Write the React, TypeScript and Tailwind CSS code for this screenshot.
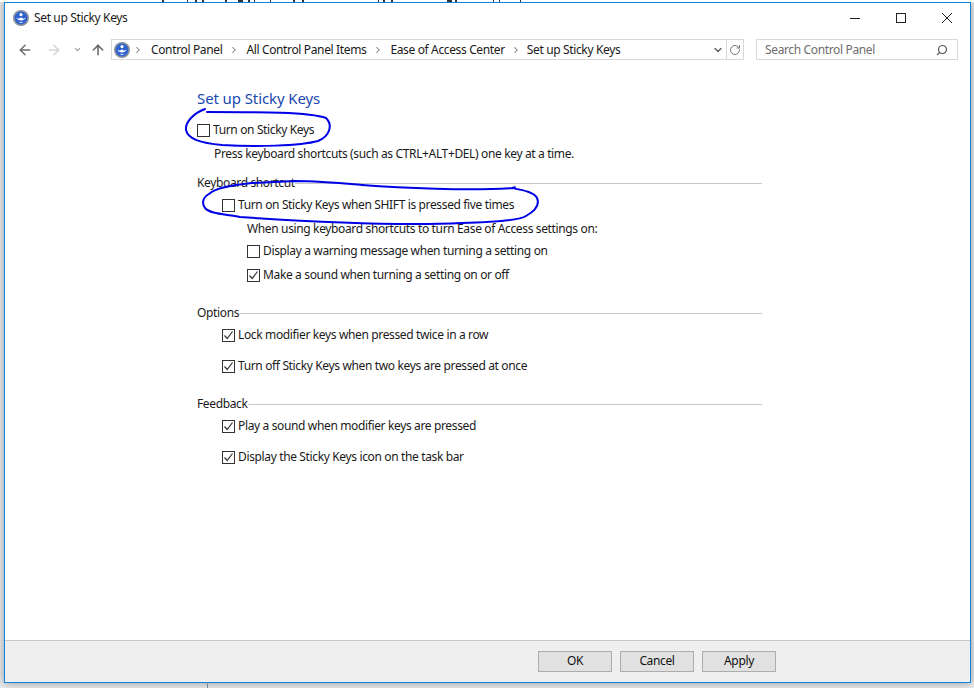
import { ArrowLeft, ArrowRight, ArrowUp, ChevronDown, ChevronRight, RotateCw, Search } from 'lucide-react';

const font = "[font-family:'Noto_Sans',sans-serif]";

// bottoms of the letters of the page behind the window, too cut off to read
const scraps = [[162, 2], [187, 1], [195, 2], [202, 2], [225, 2], [238, 5], [248, 2], [254, 1], [270, 1], [293, 2], [302, 2], [378, 1], [383, 2], [391, 2], [447, 5], [455, 2], [493, 1], [499, 1], [520, 1]];

const CpIcon = () => (
  <svg width="16" height="16" viewBox="0 0 16 16" className="shrink-0">
    <circle cx="8" cy="8" r="8" fill="#8a909c" />
    <circle cx="8" cy="8" r="6.4" fill="#2f62cf" />
    <circle cx="8" cy="4.6" r="1.6" fill="#fff" />
    <path d="M3.4 7.6 C4.6 11.6 11.4 11.6 12.6 7.6 L10.6 8.8 L8 7.4 L5.4 8.8 Z" fill="#fff" />
    <path d="M6.4 12.4 H9.6" stroke="#cfe0ff" strokeWidth="1" />
  </svg>
);

const Check = ({ checked = false }: { checked?: boolean }) => (
  <span className="flex h-[13px] w-[13px] shrink-0 items-center justify-center border border-[#333] bg-white">
    {checked && (
      <svg width="11" height="11" viewBox="0 0 11 11">
        <path d="M1.5 5.5 L4.2 8.5 L9.5 1.5" stroke="#333" strokeWidth="1.2" fill="none" />
      </svg>
    )}
  </span>
);

const CheckRow = ({ label, checked, className }: { label: string; checked?: boolean; className: string }) => (
  <div className={`flex h-[16px] items-center gap-[3px] ${className}`}>
    <Check checked={checked} />
    <span className="whitespace-nowrap">{label}</span>
  </div>
);

const GroupTitle = ({ label, className }: { label: string; className: string }) => (
  <div className={`flex h-[16px] w-[565px] items-center ${className}`}>
    <span className="whitespace-nowrap">{label}</span>
    <span className="h-px flex-1 bg-[#c8c8c8]" />
  </div>
);

const Crumb = ({ label, gap }: { label: string; gap: string }) => (
  <>
    <ChevronRight size={10} strokeWidth={2.5} className={`shrink-0 text-[#777] ${gap}`} />
    <span className="whitespace-nowrap px-[2px]">{label}</span>
  </>
);

const Btn = ({ label }: { label: string }) => (
  <button className="h-[21px] w-[74px] border border-[#adadad] bg-[#e1e1e1] text-[12px] leading-none text-[#111]">{label}</button>
);

export default function App() {
  return (
    <div className={`relative h-[688px] w-[974px] overflow-hidden bg-[#e8e8e8] pl-[4px] pt-[2px] text-[12px] leading-[16px] tracking-[-0.36px] text-[#1a1a1a] ${font}`}>
      {/* window */}
      <div className="flex h-[681px] w-[967px] flex-col border border-[#0f83e0] bg-white shadow-[0_0_8px_rgba(0,0,0,0.35)]">
        {/* title bar */}
        <div className="flex h-[30px] shrink-0 items-center pl-[8px]">
          <CpIcon />
          <span className="ml-[5px]">Set up Sticky Keys</span>
          <div className="ml-auto flex items-center text-[#222]">
            <svg width="46" height="12" viewBox="0 0 46 12"><path d="M18 6.5 H28" stroke="#222" /></svg>
            <svg width="46" height="12" viewBox="0 0 46 12"><rect x="18.5" y="1.5" width="9" height="9" fill="none" stroke="#222" /></svg>
            <svg width="46" height="12" viewBox="0 0 46 12"><path d="M18 1 L28 11 M28 1 L18 11" stroke="#222" /></svg>
          </div>
        </div>

        {/* address bar */}
        <div className="mt-[6px] flex h-[21px] shrink-0 items-center pl-[12px]">
          <ArrowLeft size={16} strokeWidth={2.2} className="text-[#6b6b6b]" />
          <ArrowRight size={16} strokeWidth={2.2} className="ml-[13px] text-[#d4d4d4]" />
          <ChevronDown size={9} strokeWidth={3} className="ml-[11px] text-[#999]" />
          <ArrowUp size={16} strokeWidth={2.4} className="ml-[8px] text-[#6b6b6b]" />
          <div className="ml-[5px] flex h-[21px] w-[633px] items-center border border-[#d9d9d9] pl-[2px]">
            <CpIcon />
            <Crumb label="Control Panel" gap="ml-[3px] mr-[6px]" />
            <Crumb label="All Control Panel Items" gap="mx-[5px]" />
            <Crumb label="Ease of Access Center" gap="mx-[5px]" />
            <Crumb label="Set up Sticky Keys" gap="mx-[4px]" />
            <div className="ml-auto flex h-full items-center">
              <ChevronDown size={12} strokeWidth={2.4} className="mr-[2px] text-[#555]" />
              <div className="flex h-full w-[17px] items-center justify-center border-l border-[#d9d9d9]">
                <RotateCw size={12} strokeWidth={2} className="text-[#777]" />
              </div>
            </div>
          </div>
          <div className="ml-[12px] flex h-[21px] w-[202px] items-center justify-between border border-[#d9d9d9] pl-[8px] pr-[9px] text-[#6d6d6d]">
            <span>Search Control Panel</span>
            <Search size={12} strokeWidth={2.4} className="-scale-x-100 text-[#555]" />
          </div>
        </div>

        {/* content */}
        <div className="flex min-h-0 flex-1 flex-col pl-[192px]">
          <h1 className="mt-[28px] h-[20px] text-[15px] font-normal leading-[20px] tracking-[-0.1px] text-[#1a49ad]">Set up Sticky Keys</h1>
          <CheckRow label="Turn on Sticky Keys" className="mt-[14px]" />
          <p className="ml-[17px] mt-[8px] whitespace-nowrap">Press keyboard shortcuts (such as CTRL+ALT+DEL) one key at a time.</p>
          <GroupTitle label="Keyboard shortcut" className="mt-[13px]" />
          <CheckRow label="Turn on Sticky Keys when SHIFT is pressed five times" className="ml-[25px] mt-[6px]" />
          <p className="ml-[50px] mt-[8px] whitespace-nowrap">When using keyboard shortcuts to turn Ease of Access settings on:</p>
          <CheckRow label="Display a warning message when turning a setting on" className="ml-[50px] mt-[6px]" />
          <CheckRow checked label="Make a sound when turning a setting on or off" className="ml-[50px] mt-[8px]" />
          <GroupTitle label="Options" className="mt-[22px]" />
          <CheckRow checked label="Lock modifier keys when pressed twice in a row" className="ml-[25px] mt-[6px]" />
          <CheckRow checked label="Turn off Sticky Keys when two keys are pressed at once" className="ml-[25px] mt-[15px]" />
          <GroupTitle label="Feedback" className="mt-[22px]" />
          <CheckRow checked label="Play a sound when modifier keys are pressed" className="ml-[25px] mt-[6px]" />
          <CheckRow checked label="Display the Sticky Keys icon on the task bar" className="ml-[25px] mt-[15px]" />
        </div>

        {/* footer */}
        <div className="flex h-[42px] shrink-0 items-center justify-end gap-[8px] border-t border-[#c8c8c8] bg-[#efefef] pb-[1px] pr-[194px]">
          <Btn label="OK" />
          <Btn label="Cancel" />
          <Btn label="Apply" />
        </div>
      </div>

      {/* pen marks drawn over the screenshot */}
      <svg width="974" height="688" viewBox="0 0 974 688" className="pointer-events-none absolute left-0 top-0" fill="none" stroke="#0000e6" strokeWidth="2" strokeLinecap="round">
        <path d="M205 109 C194 113 185 122 186 130 C188 139 200 143 222 145 C255 147 300 146 318 141 C330 136 333 125 326 118 C310 112 260 112 207 112" />
        <path d="M252 183 C232 185 215 188 209 194 C202 198 202 204 205 208 C210 214 225 214 240 217 C300 221 400 226 462 223 C495 222 520 220 526 216 C535 211 540 205 537 198 C534 192 522 190 512 188 C516 187 515 187 514 188 C470 191 400 188 362 185 C340 183 320 181 295 181 L252 183" />
      </svg>

      {/* scraps of the page behind the window */}
      <svg width="974" height="2" viewBox="0 0 974 2" className="absolute left-0 top-0 bg-white">
        {scraps.map(([x, w]) => (
          <rect key={x} x={x} y="0" width={w} height="2" fill="#333" />
        ))}
      </svg>
      <div className="absolute bottom-0 left-[207px] h-[6px] w-px bg-[#6f8fa0]" />
    </div>
  );
}
